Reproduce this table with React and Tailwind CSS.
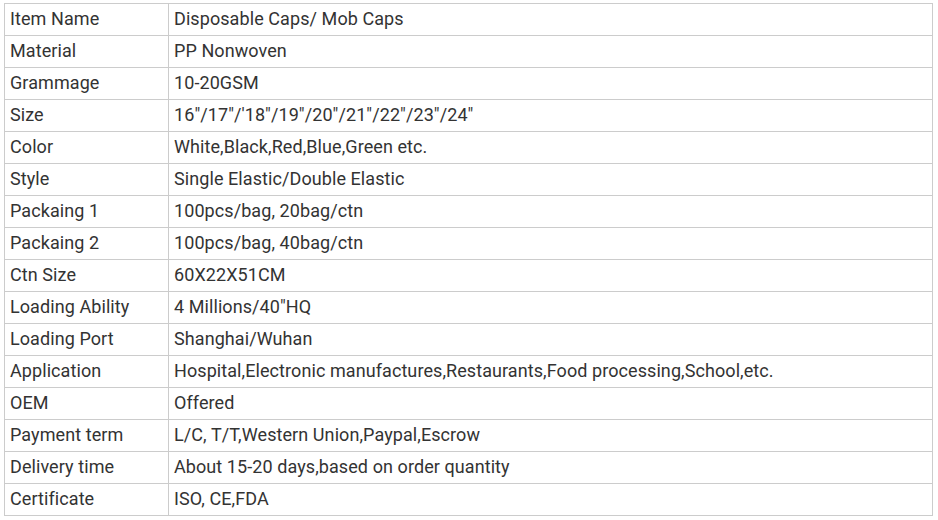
const rows = [
  ["Item Name", "Disposable Caps/ Mob Caps"],
  ["Material", "PP Nonwoven"],
  ["Grammage", "10-20GSM"],
  ["Size", "16\"/17\"/'18\"/19\"/20\"/21\"/22\"/23\"/24\""],
  ["Color", "White,Black,Red,Blue,Green etc."],
  ["Style", "Single Elastic/Double Elastic"],
  ["Packaing 1", "100pcs/bag, 20bag/ctn"],
  ["Packaing 2", "100pcs/bag, 40bag/ctn"],
  ["Ctn Size", "60X22X51CM"],
  ["Loading Ability", "4 Millions/40\"HQ"],
  ["Loading Port", "Shanghai/Wuhan"],
  ["Application", "Hospital,Electronic manufactures,Restaurants,Food processing,School,etc."],
  ["OEM", "Offered"],
  ["Payment term", "L/C, T/T,Western Union,Paypal,Escrow"],
  ["Delivery time", "About 15-20 days,based on order quantity"],
  ["Certificate", "ISO, CE,FDA"],
];

export default function App() {
  return (
    <div className="w-[938px] h-[520px] bg-white pl-[4px] pt-[3px] font-['Roboto',sans-serif] text-[18px] tracking-[0.08px] text-[#333]">
      <table className="w-[929px] border-collapse">
        <tbody>
          {rows.map(([k, v]) => (
            <tr key={k} className="h-[32px]">
              <td className="w-[164px] border border-[#cccccc] px-[5px] pt-0 pb-[1px] leading-[30px]">{k}</td>
              <td className="border border-[#cccccc] px-[5px] pt-0 pb-[1px] leading-[30px]">{v}</td>
            </tr>
          ))}
        </tbody>
      </table>
    </div>
  );
}
